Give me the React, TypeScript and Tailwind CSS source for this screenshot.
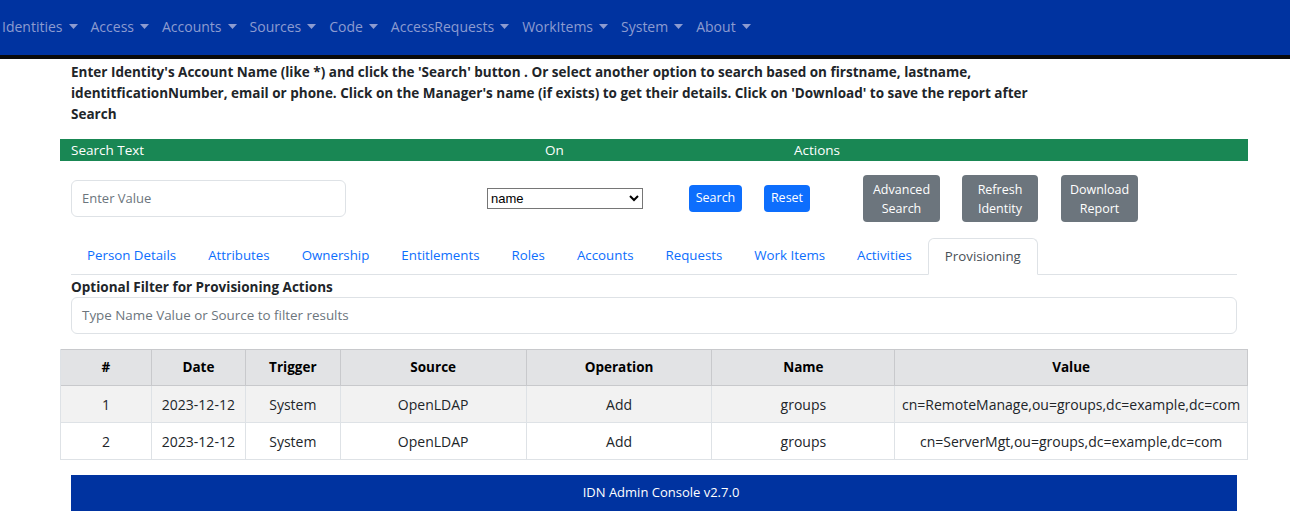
import React from "react";

const Caret = () => (
  <svg width="9" height="5" viewBox="0 0 9 5" className="inline-block ml-[6px] mb-[3px]">
    <path d="M0 0 L9 0 L4.5 5 Z" fill="currentColor" />
  </svg>
);

const navItems = ["Identities", "Access", "Accounts", "Sources", "Code", "AccessRequests", "WorkItems", "System", "About"];
const tabs = ["Person Details", "Attributes", "Ownership", "Entitlements", "Roles", "Accounts", "Requests", "Work Items", "Activities", "Provisioning"];

const rows = [
  ["1", "2023-12-12", "System", "OpenLDAP", "Add", "groups", "cn=RemoteManage,ou=groups,dc=example,dc=com"],
  ["2", "2023-12-12", "System", "OpenLDAP", "Add", "groups", "cn=ServerMgt,ou=groups,dc=example,dc=com"],
];
const headers = ["#", "Date", "Trigger", "Source", "Operation", "Name", "Value"];
const colW = ["w-[91px]", "w-[94px]", "w-[95px]", "w-[186px]", "w-[186px]", "w-[183px]", "w-[353px]"];

export default function App() {
  return (
    <div className="w-[1290px] h-[526px] bg-white overflow-hidden text-[#212529]" style={{ fontFamily: '"Open Sans", "Noto Sans", sans-serif' }}>
      {/* Navbar */}
      <nav className="h-[55px] bg-[#0033a0] flex items-center text-[14px] text-[#8c9bd0]">
        <div className="flex items-center pl-[2px] -mt-[2px]">
          {navItems.map((n) => (
            <span key={n} className="pr-[13px] whitespace-nowrap">
              {n}
              <Caret />
            </span>
          ))}
        </div>
      </nav>
      <div className="h-[4px] bg-[#0a0a0a]" />

      <div className="w-[1188px] ml-[60px]">
        {/* Instructions */}
        <div className="px-[11px] pt-[3px] text-[13.5px] font-bold leading-[21px] whitespace-nowrap">
          Enter Identity's Account Name (like *) and click the 'Search' button . Or select another option to search based on firstname, lastname,
          <br />
          identitficationNumber, email or phone. Click on the Manager's name (if exists) to get their details. Click on 'Download' to save the report after
          <br />
          Search
        </div>

        {/* Green bar */}
        <div className="mt-[14px] h-[22px] bg-[#198754] text-white text-[13.5px] flex items-center pl-[11px]">
          <span className="w-[474px]">Search Text</span>
          <span className="w-[249px]">On</span>
          <span>Actions</span>
        </div>

        {/* Controls */}
        <div className="mt-[14px] h-[47px] flex items-center pl-[11px] text-[13px]">
          <div className="w-[275px] h-[37px] border border-[#dee2e6] rounded-[6px] flex items-center px-[10px] text-[#6c757d]">
            Enter Value
          </div>
          <div className="ml-[141px] w-[156px] h-[21px] border border-[#767676] flex items-center justify-between pl-[3px] pr-[3px] text-[13px] text-black" style={{ fontFamily: '"Liberation Sans", sans-serif' }}>
            <span>name</span>
            <svg width="10" height="7" viewBox="0 0 10 7">
              <path d="M1 1 L5 5 L9 1" stroke="black" strokeWidth="2" fill="none" />
            </svg>
          </div>
          <div className="ml-[46px] w-[53px] h-[27px] bg-[#0d6efd] rounded-[4px] text-white text-[12.5px] flex items-center justify-center">Search</div>
          <div className="ml-[22px] w-[46px] h-[27px] bg-[#0d6efd] rounded-[4px] text-white text-[12.5px] flex items-center justify-center">Reset</div>
          <div className="ml-[53px] w-[77px] h-[47px] bg-[#6c757d] rounded-[4px] text-white text-[12.5px] leading-[19px] flex flex-col items-center justify-center text-center">
            <span>Advanced</span>
            <span>Search</span>
          </div>
          <div className="ml-[22px] w-[76px] h-[47px] bg-[#6c757d] rounded-[4px] text-white text-[12.5px] leading-[19px] flex flex-col items-center justify-center text-center">
            <span>Refresh</span>
            <span>Identity</span>
          </div>
          <div className="ml-[23px] w-[77px] h-[47px] bg-[#6c757d] rounded-[4px] text-white text-[12.5px] leading-[19px] flex flex-col items-center justify-center text-center">
            <span>Download</span>
            <span>Report</span>
          </div>
        </div>

        {/* Tabs */}
        <div className="mx-[11px] mt-[16px] h-[37px] flex border-b border-[#dee2e6] text-[13.3px]">
          {tabs.map((t) => {
            const active = t === "Provisioning";
            return (
              <div
                key={t}
                className={
                  active
                    ? "px-[16px] h-[37px] -mb-px flex items-center border border-[#dee2e6] border-b-white rounded-t-[6px] bg-white text-[#495057]"
                    : "px-[16px] h-[36px] flex items-center text-[#0d6efd]"
                }
              >
                {t}
              </div>
            );
          })}
        </div>

        {/* Filter */}
        <div className="px-[11px]">
          <div className="text-[13.5px] font-bold leading-[20px] mt-[2px]">Optional Filter for Provisioning Actions</div>
          <div className="h-[37px] border border-[#dee2e6] rounded-[6px] flex items-center px-[10px] text-[13.4px] text-[#6c757d]">
            Type Name Value or Source to filter results
          </div>
        </div>

        {/* Table */}
        <div className="mt-[15px] border-l border-[#dee2e6]">
          <div className="flex h-[37px] bg-[#e2e3e5] text-[13.5px] font-bold text-black border-t border-[#c8c9cc]">
            {headers.map((h, i) => (
              <div key={h} className={`${colW[i]} flex items-center justify-center border-r border-[#c8c9cc] border-b`}>
                {h}
              </div>
            ))}
          </div>
          {rows.map((r, ri) => (
            <div key={ri} className={`flex h-[37px] text-[14px] ${ri === 0 ? "bg-[#f2f2f2]" : "bg-white"}`}>
              {r.map((c, i) => (
                <div key={i} className={`${colW[i]} flex items-center justify-center border-r border-b border-[#dee2e6] whitespace-nowrap`}>
                  {c}
                </div>
              ))}
            </div>
          ))}
        </div>

        {/* Footer */}
        <div className="mx-[11px] mt-[15px] h-[36px] bg-[#0033a0] text-white text-[13px] flex items-center justify-center pl-[14px]">
          IDN Admin Console v2.7.0
        </div>
      </div>
    </div>
  );
}
